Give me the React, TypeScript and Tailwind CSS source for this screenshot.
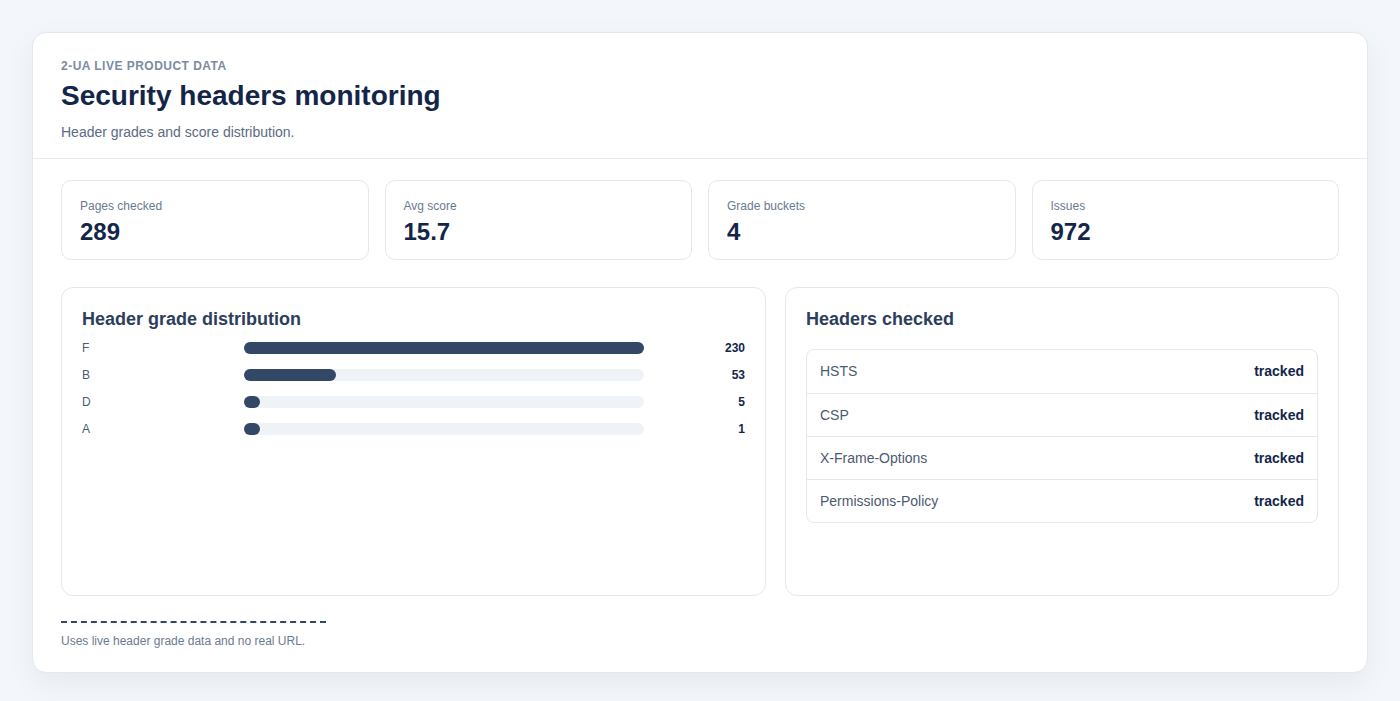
export default function App() {
  const bars = [
    { g: "F", v: 230 },
    { g: "B", v: 53 },
    { g: "D", v: 5 },
    { g: "A", v: 1 },
  ];
  const stats = [
    ["Pages checked", "289"],
    ["Avg score", "15.7"],
    ["Grade buckets", "4"],
    ["Issues", "972"],
  ];
  const headers = ["HSTS", "CSP", "X-Frame-Options", "Permissions-Policy"];
  return (
    <div className="min-h-[701px] bg-[#f3f6fa] p-[32px] pb-[33px]" style={{ fontFamily: "'Liberation Sans', Arial, sans-serif" }}>
      <div className="rounded-[14px] border border-[#e2e8f0] bg-white shadow-[0_10px_30px_rgba(15,23,42,0.06)]">
        <div className="border-b border-[#e5eaf0] px-[28px] pt-[24px] pb-[15px]">
          <div className="text-[12px] font-bold uppercase tracking-[0.04em] text-[#7b8ba3]">2-UA live product data</div>
          <h1 className="mt-[4px] text-[28px] font-bold leading-[34px] text-[#13264a]">Security headers monitoring</h1>
          <p className="mt-[9px] text-[14px] text-[#5b6b82]">Header grades and score distribution.</p>
        </div>
        <div className="px-[28px] pt-[21px] pb-[22px]">
          <div className="grid grid-cols-4 gap-[16px]">
            {stats.map(([l, v]) => (
              <div key={l} className="h-[80px] rounded-[10px] border border-[#e2e8f0] px-[18px] pt-[16px]">
                <div className="text-[12px] text-[#6b7a90]">{l}</div>
                <div className="mt-[3px] text-[24px] font-bold leading-[28px] text-[#13264a]">{v}</div>
              </div>
            ))}
          </div>
          <div className="mt-[27px] grid grid-cols-[705px_1fr] gap-[19px]">
            <div className="h-[309px] rounded-[12px] border border-[#e2e8f0] px-[20px] pt-[18px]">
              <h2 className="text-[18px] font-bold text-[#2c3e5c]">Header grade distribution</h2>
              <div className="mt-[9px] flex flex-col gap-[15px]">
                {bars.map((b) => (
                  <div key={b.g} className="grid grid-cols-[150px_400px_1fr] items-center gap-[12px] text-[12px] leading-[12px]">
                    <span className="text-[#4b5a70]">{b.g}</span>
                    <div className="h-[12px] rounded-full bg-[#eff3f8]">
                      <div className="h-[12px] min-w-[16px] rounded-full bg-[#334766]" style={{ width: `${(b.v / 230) * 100}%` }} />
                    </div>
                    <span className="text-right font-bold text-[#13264a]">{b.v}</span>
                  </div>
                ))}
              </div>
            </div>
            <div className="h-[309px] rounded-[12px] border border-[#e2e8f0] px-[20px] pt-[18px]">
              <h2 className="text-[18px] font-bold text-[#2c3e5c]">Headers checked</h2>
              <div className="mt-[16px] rounded-[8px] border border-[#e2e8f0]">
                {headers.map((h, i) => (
                  <div key={h} className={`flex h-[43px] items-center justify-between px-[13px] text-[14px] ${i ? "border-t border-[#e2e8f0]" : ""}`}>
                    <span className="text-[#4b5a70]">{h}</span>
                    <span className="font-bold text-[#13264a]">tracked</span>
                  </div>
                ))}
              </div>
            </div>
          </div>
          <div className="mt-[25px] w-[265px] border-t-2 border-dashed border-[#334766]" />
          <p className="mt-[9px] text-[12px] text-[#6b7a90]">Uses live header grade data and no real URL.</p>
        </div>
      </div>
    </div>
  );
}
